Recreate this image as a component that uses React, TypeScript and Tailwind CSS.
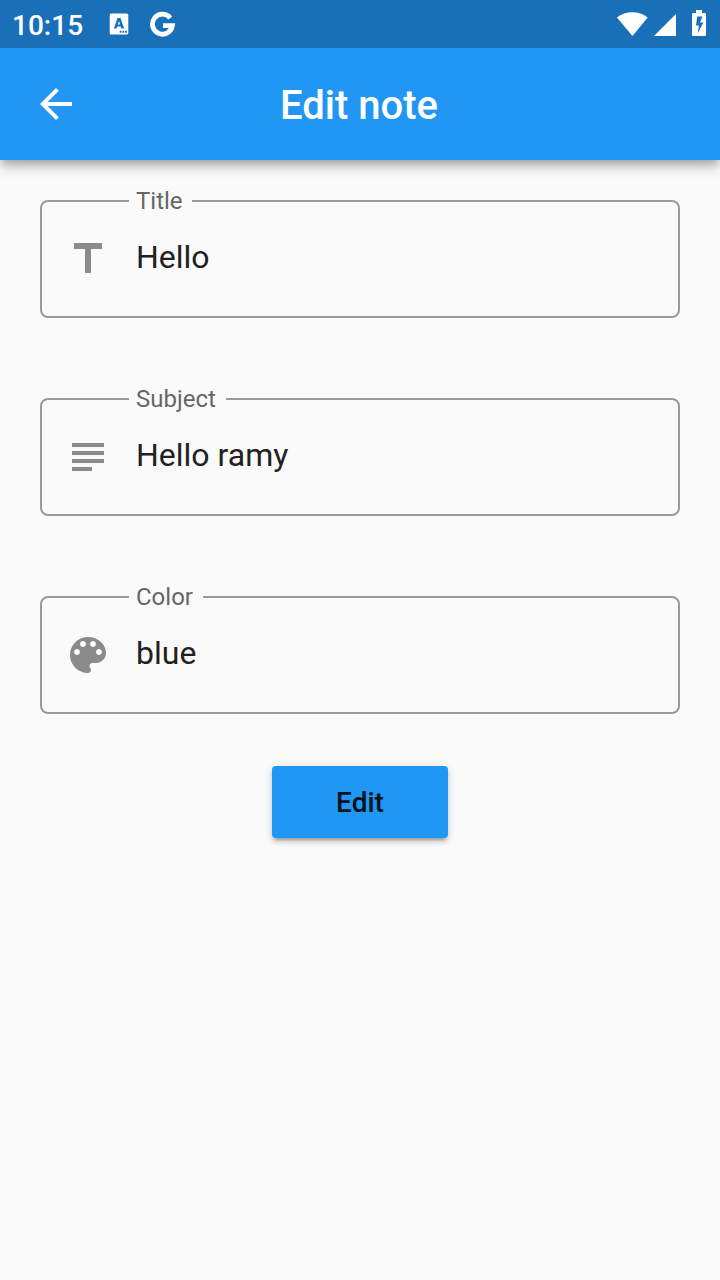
import React from "react";

const icons = {
  title: "M5 4v3h5.5v12h3V7H19V4H5z",
  subject: "M14 17H4v2h10v-2zm6-8H4v2h16V9zM4 15h16v-2H4v2zM4 5v2h16V5H4z",
  palette:
    "M12 3c-4.97 0-9 4.03-9 9s4.03 9 9 9c.83 0 1.5-.67 1.5-1.5 0-.39-.15-.74-.39-1.01-.23-.26-.38-.61-.38-.99 0-.83.67-1.5 1.5-1.5H16c2.76 0 5-2.24 5-5 0-4.42-4.03-8-9-8zm-5.5 9c-.83 0-1.5-.67-1.5-1.5S5.67 9 6.5 9 8 9.67 8 10.5 7.33 12 6.5 12zm3-4C8.67 8 8 7.33 8 6.5S8.67 5 9.5 5s1.5.67 1.5 1.5S10.33 8 9.5 8zm5 0c-.83 0-1.5-.67-1.5-1.5S13.67 5 14.5 5s1.5.67 1.5 1.5S15.33 8 14.5 8zm3 4c-.83 0-1.5-.67-1.5-1.5S16.67 9 17.5 9s1.5.67 1.5 1.5-.67 1.5-1.5 1.5z",
};

function Field({ label, value, icon }: { label: string; value: string; icon: string }) {
  return (
    <fieldset className="h-[130px] rounded-lg border-2 border-[#9a9a9a]">
      <legend className="ml-[87px] pr-[9.75px] pl-[7px] text-2xl leading-[26px] text-[#666666]">
        {label}
      </legend>
      <div className="flex pl-[22px]">
        <svg className="mt-[21px] size-12 shrink-0 fill-[#8b8b8b]" viewBox="0 0 24 24">
          <path d={icon} />
        </svg>
        <span className="mt-6 ml-6 text-[32px] leading-[38px] text-[#212121]">{value}</span>
      </div>
    </fieldset>
  );
}

function StatusBar() {
  return (
    <div className="flex h-12 items-center justify-between bg-[#1a70b8] pr-3 pl-3 text-white">
      <div className="flex items-center">
        <span className="w-[97px] pt-1 text-[28px] leading-8 font-medium">10:15</span>
        <svg className="h-[22px] w-5" viewBox="0 0 20 22">
          <path
            fill="currentColor"
            fillRule="evenodd"
            d="M2.200 .5h15.600A1.500 1.500 0 0 1 19.300 2v18a1.500 1.500 0 0 1-1.500 1.500H2.200A1.500 1.500 0 0 1 .7 20V2A1.500 1.500 0 0 1 2.200 .5zM8.500 5 4.900 15.500h2.800l.6-2h3.400l.6 2h2.800L11.500 5zM8.900 11.500l1.100-3.500 1.100 3.500zM10.700 17.800v1.900h1.800v-1.900zm2.700 0v1.900h1.800v-1.900zm2.700 0v1.900h1.800v-1.900z"
          />
        </svg>
        <svg className="mt-px ml-5 size-7" viewBox="0 0 28 28" fill="none">
          <path d="M21.300 6.900A10 10 0 1 0 23.400 14.600H14" stroke="currentColor" strokeWidth="4.800" />
        </svg>
      </div>
      <div className="flex items-center">
        <svg className="h-6 w-8" viewBox="0 0 32 24" fill="currentColor">
          <path d="M.9 5.500C9.300-1.600 23.300-1.600 31.700 5.500L16.500 24z" />
        </svg>
        <svg className="ml-[6px] mt-[2px] h-[22px] w-[22px]" viewBox="0 0 22 22" fill="currentColor">
          <path d="M22 0v22H0z" />
        </svg>
        <svg className="mr-[2px] mb-[2px] ml-4 h-[26px] w-[14px]" viewBox="0 0 14 26" fill="currentColor">
          <path
            fillRule="evenodd"
            d="M4 0h6v3h2.700c.7 0 1.300.6 1.300 1.300v20.400c0 .7-.6 1.300-1.300 1.300H1.300C.6 26 0 25.400 0 24.700V4.300C0 3.600.6 3 1.300 3H4zM5.200 6.500 4 15.500h3L5.600 23.500 11.400 12.500H8l2.500-6z"
          />
        </svg>
      </div>
    </div>
  );
}

export default function App() {
  return (
    <div className="flex h-[1280px] w-[720px] flex-col bg-[#fafafa] font-[Roboto,sans-serif]">
      <header className="shadow-[0_4px_8px_-2px_rgba(0,0,0,0.2),0_8px_10px_0_rgba(0,0,0,0.14),0_2px_20px_0_rgba(0,0,0,0.12)]">
        <StatusBar />
        <div className="grid h-28 grid-cols-[1fr_auto_1fr] items-center bg-[#2196f3] px-8 text-white">
          <button aria-label="Back" className="size-12">
            <svg className="size-12 fill-current" viewBox="0 0 24 24">
              <path d="M20 11H7.830l5.590-5.590L12 4l-8 8 8 8 1.410-1.410L7.830 13H20v-2z" />
            </svg>
          </button>
          <h1 className="pt-1 pr-[2px] text-[40px] leading-[46px] font-medium">Edit note</h1>
        </div>
      </header>
      <main className="flex flex-col px-10 pt-7">
        <div className="flex flex-col gap-[68px]">
          <Field label="Title" value="Hello" icon={icons.title} />
          <Field label="Subject" value="Hello ramy" icon={icons.subject} />
          <Field label="Color" value="blue" icon={icons.palette} />
        </div>
        <button className="mt-[52px] h-[72px] w-44 self-center rounded bg-[#2196f3] pt-px text-[28px] leading-8 font-medium text-[#04121d] shadow-[0_6px_2px_-4px_rgba(0,0,0,0.2),0_4px_4px_0_rgba(0,0,0,0.14),0_2px_10px_0_rgba(0,0,0,0.12)]">
          Edit
        </button>
      </main>
    </div>
  );
}
